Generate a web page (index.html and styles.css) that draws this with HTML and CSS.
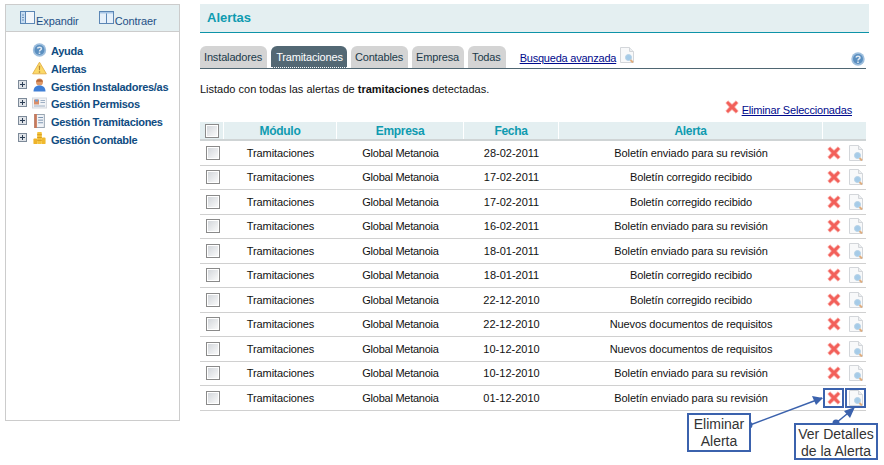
FILE: index.html
```html
<!DOCTYPE html>
<html lang="es">
<head>
<meta charset="utf-8">
<title>Alertas</title>
<link rel="stylesheet" href="styles.css">
</head>
<body>
<svg class="defs" width="0" height="0">
  <defs>
    <symbol id="i-x" viewBox="0 0 14 14">
      <path d="M.8 3 3 .8 7 4.400 11 .8 13.200 3 9.600 7 13.200 11 11 13.200 7 9.600 3 13.200 .8 11 4.400 7Z" fill="#f2605a" stroke="#f9aaa5" stroke-width=".7"/>
    </symbol>
    <symbol id="i-doc" viewBox="0 0 14 16">
      <path d="M.5.5H9.500L13.500 4.500V15.500H.5Z" fill="#f8f9fa" stroke="#d3d6da"/>
      <path d="M9.500.5V4.500H13.500" fill="#eceef0" stroke="#d3d6da"/>
      <circle cx="8.500" cy="10.500" r="3" fill="#a5cbe8" stroke="#b7d2e6"/>
      <path d="M10.500 13 13 15.500" stroke="#e0ae80" stroke-width="2"/>
    </symbol>
    <symbol id="i-help" viewBox="0 0 14 14">
      <circle cx="7" cy="7" r="6.700" fill="#9dbedd"/>
      <circle cx="7" cy="7" r="5" fill="#5b8fc0"/>
      <path d="M5 5.500C5.300 3.800 9 3.800 9 5.700 9 7 7 7 7 8.500" fill="none" stroke="#dfe9f2" stroke-width="1.500"/>
      <path d="M6.200 9.500H7.800V11H6.200Z" fill="#dfe9f2"/>
    </symbol>
    <symbol id="i-plus" viewBox="0 0 9 9">
      <rect x=".5" y=".5" width="8" height="8" fill="#dfe3e8" stroke="#7d8a99"/>
      <path d="M2 4.500H7M4.500 2V7" stroke="#2c3e55"/>
    </symbol>
  </defs>
</svg>
<div class="page">
  <aside class="side">
    <div class="side-head">
      <a class="tool">
        <svg class="tool-icon" viewBox="0 0 15 13"><rect x=".5" y=".5" width="14" height="12" fill="#c6dcf2" stroke="#5b86b5"/><path d="M6 1H14V12H6Z" fill="#f2f6fb"/><path d="M2 4H4M2 6.500H4M2 9H4" stroke="#6f93ba"/><path d="M5.500 1V12" stroke="#5b86b5"/></svg>
        <span>Expandir</span>
      </a>
      <a class="tool">
        <svg class="tool-icon" viewBox="0 0 15 13"><rect x=".5" y=".5" width="14" height="12" fill="#e6f0fa" stroke="#5b86b5"/><path d="M7.500 1V12" stroke="#5b86b5"/><path d="M1 1H14V2.500H1Z" fill="#a8c6e6"/></svg>
        <span>Contraer</span>
      </a>
    </div>
    <ul class="tree">
      <li class="node"><span class="slot"></span><svg class="node-icon"><use href="#i-help"/></svg><a>Ayuda</a></li>
      <li class="node"><span class="slot"></span><svg class="node-icon" viewBox="0 0 16 14"><path d="M8 .8 15.300 13.200H.7Z" fill="#fbd968" stroke="#e5b24a"/><path d="M7.200 4.500H8.800L8.500 9.500H7.500ZM7.300 10.500H8.700V12H7.300Z" fill="#b98a38"/></svg><a>Alertas</a></li>
      <li class="node"><svg class="slot"><use href="#i-plus"/></svg><svg class="node-icon" viewBox="0 0 14 14"><circle cx="7" cy="4" r="3.500" fill="#e09a68"/><path d="M3.500 3.800C4.500.5 9.500.5 10.500 3.800Z" fill="#b5673a"/><path d="M1 13.500C1 9 4 7.500 7 7.500S13 9 13 13.500Z" fill="#3f7fd6"/></svg><a>Gestión Instaladores/as</a></li>
      <li class="node"><svg class="slot"><use href="#i-plus"/></svg><svg class="node-icon" viewBox="0 0 15 11"><rect x=".5" y=".5" width="14" height="10" fill="#f1f3f6" stroke="#d5d9df"/><rect x="2" y="2" width="5" height="5" fill="#d98f6a"/><rect x="3" y="2" width="3" height="2" fill="#6d9ed6"/><path d="M8.500 3H13M8.500 5H13M2 8.500H13" stroke="#9fb0c4"/></svg><a>Gestión Permisos</a></li>
      <li class="node"><svg class="slot"><use href="#i-plus"/></svg><svg class="node-icon" viewBox="0 0 16 16"><rect x="2.500" y=".5" width="11" height="15" fill="#f0f3f7" stroke="#8d9aa8"/><rect x="2" y="0" width="3" height="16" fill="#c8795a"/><path d="M6.500 4H12M6.500 7H12M6.500 10H12" stroke="#6d88a8"/></svg><a>Gestión Tramitaciones</a></li>
      <li class="node"><svg class="slot"><use href="#i-plus"/></svg><svg class="node-icon" viewBox="0 0 15 15"><rect x="5" y="1" width="5" height="13" rx="1" fill="#f5c33b"/><rect x="1" y="8" width="4" height="6" rx="1" fill="#eeb32a"/><rect x="10" y="7" width="4" height="7" rx="1" fill="#f0b92e"/><path d="M5 4H10M5 7H10M5 10H10" stroke="#d4991d"/></svg><a>Gestión Contable</a></li>
    </ul>
  </aside>
  <main class="main">
    <h1 class="title">Alertas</h1>
    <div class="tabs">
      <a class="tab">Instaladores</a>
      <a class="tab active">Tramitaciones</a>
      <a class="tab">Contables</a>
      <a class="tab">Empresa</a>
      <a class="tab">Todas</a>
      <a class="search">Busqueda avanzada</a>
      <svg class="search-icon"><use href="#i-doc"/></svg>
      <svg class="help-icon"><use href="#i-help"/></svg>
    </div>
    <p class="intro">Listado con todas las alertas de <b>tramitaciones</b> detectadas.</p>
    <div class="bulk">
      <svg class="bulk-x"><use href="#i-x"/></svg>
      <a class="bulk-link">Eliminar Seleccionadas</a>
    </div>
    <div class="grid">
      <div class="row head">
        <div class="cell"><span class="check"></span></div>
        <div class="cell">Módulo</div>
        <div class="cell">Empresa</div>
        <div class="cell">Fecha</div>
        <div class="cell">Alerta</div>
        <div class="cell"></div>
      </div>
      <div class="row"><div class="cell"><span class="check"></span></div><div class="cell">Tramitaciones</div><div class="cell">Global Metanoia</div><div class="cell">28-02-2011</div><div class="cell">Boletín enviado para su revisión</div><div class="cell acts"><svg class="act-x"><use href="#i-x"/></svg><svg class="act-doc"><use href="#i-doc"/></svg></div></div>
      <div class="row"><div class="cell"><span class="check"></span></div><div class="cell">Tramitaciones</div><div class="cell">Global Metanoia</div><div class="cell">17-02-2011</div><div class="cell">Boletín corregido recibido</div><div class="cell acts"><svg class="act-x"><use href="#i-x"/></svg><svg class="act-doc"><use href="#i-doc"/></svg></div></div>
      <div class="row"><div class="cell"><span class="check"></span></div><div class="cell">Tramitaciones</div><div class="cell">Global Metanoia</div><div class="cell">17-02-2011</div><div class="cell">Boletín corregido recibido</div><div class="cell acts"><svg class="act-x"><use href="#i-x"/></svg><svg class="act-doc"><use href="#i-doc"/></svg></div></div>
      <div class="row"><div class="cell"><span class="check"></span></div><div class="cell">Tramitaciones</div><div class="cell">Global Metanoia</div><div class="cell">16-02-2011</div><div class="cell">Boletín enviado para su revisión</div><div class="cell acts"><svg class="act-x"><use href="#i-x"/></svg><svg class="act-doc"><use href="#i-doc"/></svg></div></div>
      <div class="row"><div class="cell"><span class="check"></span></div><div class="cell">Tramitaciones</div><div class="cell">Global Metanoia</div><div class="cell">18-01-2011</div><div class="cell">Boletín enviado para su revisión</div><div class="cell acts"><svg class="act-x"><use href="#i-x"/></svg><svg class="act-doc"><use href="#i-doc"/></svg></div></div>
      <div class="row"><div class="cell"><span class="check"></span></div><div class="cell">Tramitaciones</div><div class="cell">Global Metanoia</div><div class="cell">18-01-2011</div><div class="cell">Boletín corregido recibido</div><div class="cell acts"><svg class="act-x"><use href="#i-x"/></svg><svg class="act-doc"><use href="#i-doc"/></svg></div></div>
      <div class="row"><div class="cell"><span class="check"></span></div><div class="cell">Tramitaciones</div><div class="cell">Global Metanoia</div><div class="cell">22-12-2010</div><div class="cell">Boletín corregido recibido</div><div class="cell acts"><svg class="act-x"><use href="#i-x"/></svg><svg class="act-doc"><use href="#i-doc"/></svg></div></div>
      <div class="row"><div class="cell"><span class="check"></span></div><div class="cell">Tramitaciones</div><div class="cell">Global Metanoia</div><div class="cell">22-12-2010</div><div class="cell">Nuevos documentos de requisitos</div><div class="cell acts"><svg class="act-x"><use href="#i-x"/></svg><svg class="act-doc"><use href="#i-doc"/></svg></div></div>
      <div class="row"><div class="cell"><span class="check"></span></div><div class="cell">Tramitaciones</div><div class="cell">Global Metanoia</div><div class="cell">10-12-2010</div><div class="cell">Nuevos documentos de requisitos</div><div class="cell acts"><svg class="act-x"><use href="#i-x"/></svg><svg class="act-doc"><use href="#i-doc"/></svg></div></div>
      <div class="row"><div class="cell"><span class="check"></span></div><div class="cell">Tramitaciones</div><div class="cell">Global Metanoia</div><div class="cell">10-12-2010</div><div class="cell">Boletín enviado para su revisión</div><div class="cell acts"><svg class="act-x"><use href="#i-x"/></svg><svg class="act-doc"><use href="#i-doc"/></svg></div></div>
      <div class="row"><div class="cell"><span class="check"></span></div><div class="cell">Tramitaciones</div><div class="cell">Global Metanoia</div><div class="cell">01-12-2010</div><div class="cell">Boletín enviado para su revisión</div><div class="cell acts"><svg class="act-x"><use href="#i-x"/></svg><svg class="act-doc"><use href="#i-doc"/></svg></div></div>
    </div>
  </main>
</div>
<svg class="arrows" viewBox="0 0 884 465">
  <rect class="mark" x="824" y="389" width="19" height="18"/>
  <rect class="mark" x="846" y="389" width="19" height="18"/>
  <path class="arrow-line" d="M750 425 822 398"/>
  <path class="arrow-head" d="M823 398 812 396 816 405Z"/>
  <circle class="arrow-dot" cx="749" cy="425" r="3.500"/>
  <path class="arrow-line" d="M836 423 853 409"/>
  <path class="arrow-head" d="M855 407 844 411 850 418Z"/>
  <circle class="arrow-dot" cx="836" cy="423" r="3.500"/>
</svg>
<div class="note note-a">Eliminar<br>Alerta</div>
<div class="note note-b">Ver Detalles<br>de la Alerta</div>
</body>
</html>
```
FILE: styles.css
```css
* { box-sizing: border-box; }
html, body { margin: 0; padding: 0; }
body {
  width: 884px;
  height: 465px;
  overflow: hidden;
  background: #fff;
  font-family: "Liberation Sans", Arial, sans-serif;
  font-size: 11px;
  color: #111;
  position: relative;
}
.defs { position: absolute; }
.page {
  display: flex;
  align-items: flex-start;
  gap: 20px;
  padding: 4px 0 0 5px;
}
.side {
  width: 175px;
  height: 417px;
  flex: none;
  border: 1px solid #ccc;
}
.side-head {
  height: 27px;
  background: #e4eff1;
  border-bottom: 1px solid #ccc;
  display: flex;
  gap: 20px;
  padding: 6px 0 0 14px;
  color: #1f4f86;
}
.tool { display: flex; align-items: flex-start; gap: 1px; height: 18px; letter-spacing: -.1px; }
.tool-icon { width: 15px; height: 13px; }
.tool span { line-height: 13px; margin-top: 4px; }
.tree {
  list-style: none;
  margin: 0;
  padding: 10.500px 0 0 12px;
  font-weight: bold;
  letter-spacing: -.3px;
  color: #0f4c81;
}
.node {
  height: 17.700px;
  display: flex;
  align-items: center;
}
.slot { width: 9px; height: 9px; flex: none; margin: 0 5px 4px 0; }
.node-icon { width: 15px; height: 14px; flex: none; margin-top: -3px; }
.node a { margin-left: 4px; white-space: nowrap; }
.main { width: 669px; flex: none; }
.title {
  margin: 0;
  height: 29px;
  background: #e4eff1;
  border-bottom: 1px solid #0d93a8;
  color: #0f9bb0;
  font-size: 13px;
  line-height: 28px;
  padding-left: 7px;
}
.tabs {
  margin-top: 13px;
  width: 666px;
  height: 23px;
  border-bottom: 1px solid #4f6672;
  display: flex;
  gap: 4px;
  align-items: flex-end;
  letter-spacing: -.15px;
}
.tab {
  height: 22px;
  line-height: 23px;
  padding: 0 5px 0 4px;
  background: #d4d4d4;
  border-radius: 6px 6px 0 0;
  color: #1b3a4a;
  white-space: nowrap;
}
.tab.active {
  background: #536874;
  color: #fff;
  padding: 0 4px 0 5px;
  border-bottom: 1px dotted #fff;
}
.search {
  margin: 0 0 3px 10px;
  color: #000a8c;
  text-decoration: underline;
  line-height: 13px;
  letter-spacing: -.22px;
}
.search-icon { width: 14px; height: 16px; margin: 0 0 5px 0; }
.help-icon { width: 14px; height: 14px; margin: 0 1px 2px auto; }
.intro { margin: 14px 0 0; line-height: 13px; }
.bulk {
  margin-top: 5px;
  width: 652px;
  height: 16px;
  display: flex;
  justify-content: flex-end;
  align-items: flex-end;
  gap: 3px;
}
.bulk-x { width: 14px; height: 14px; margin-bottom: 3px; }
.bulk-link { color: #000a8c; text-decoration: underline; line-height: 13px; letter-spacing: -.18px; }
.grid { margin-top: 5px; width: 666px; }
.row {
  display: grid;
  grid-template-columns: 24px 113px 127px 95px 264px 43px;
  height: 24.500px;
  border-bottom: 1px solid #d0d0d0;
}
.row.head {
  height: 19px;
  border-bottom: 2px solid #cfd4d5;
  color: #0f9bb0;
  font-weight: bold;
  font-size: 12px;
  letter-spacing: -.3px;
}
.head .cell { background: #e4eff1; border-right: 1px solid #fff; }
.head .cell:last-child { border-right: 0; }
.cell {
  display: flex;
  align-items: center;
  justify-content: center;
}
.row:not(.head) .cell:first-child { padding-left: 1px; }
.row:not(.head) .cell:nth-child(2) { letter-spacing: -.1px; }
.row:not(.head) .cell:nth-child(3) { letter-spacing: -.25px; }
.row:not(.head) .cell:nth-child(5) { letter-spacing: -.1px; }
.check {
  width: 14px;
  height: 14px;
  border: 1px solid #8a8a8a;
  background: linear-gradient(135deg, #cfd3d8, #fdfdfd);
  box-shadow: inset 0 0 0 1px #fff;
}
.acts { gap: 8px; }
.act-x { width: 14px; height: 14px; }
.act-doc { width: 14px; height: 16px; }
.arrows {
  position: absolute;
  left: 0;
  top: 0;
  width: 884px;
  height: 465px;
  pointer-events: none;
}
.mark { fill: none; stroke: #3b62ad; stroke-width: 2; }
.arrow-line { stroke: #3b62ad; stroke-width: 1.500; fill: none; }
.arrow-head, .arrow-dot { fill: #3b62ad; }
.note {
  position: absolute;
  background: #fff;
  border: 2px solid #3b62ad;
  color: #333;
  font-size: 14px;
  line-height: 17px;
  padding-top: 1px;
  text-align: center;
}
.note-a { left: 687px; top: 413px; width: 64px; height: 39px; }
.note-b { left: 794px; top: 423px; width: 84px; height: 37px; }
```
